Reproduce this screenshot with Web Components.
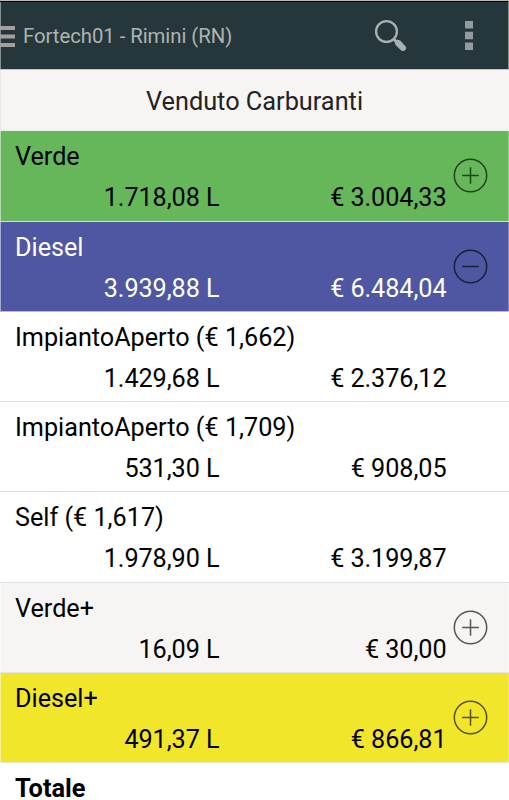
<!DOCTYPE html>
<html lang="it">
<head>
<meta charset="utf-8">
<title>Venduto Carburanti</title>
<style>
  body {
    margin: 0;
    height: 800px;
    overflow: hidden;
    background: #fff;
    color: #000;
    font-family: Roboto, "Liberation Sans", sans-serif;
  }
</style>
</head>
<body>
<sales-screen></sales-screen>

<script>
class AppBar extends HTMLElement {
  connectedCallback() {
    this.attachShadow({ mode: 'open' });
    this.shadowRoot.innerHTML = `
      <style>
        :host {
          display: flex;
          align-items: center;
          box-sizing: border-box;
          height: 69px;
          border-top: 1px solid #b5bab4;
          border-right: 1px solid #84908f;
          background: #25373b;
          box-shadow: inset 0 1px #000, inset 1px 0 #84908f;
          color: #b1b3b2;
        }
        .drawer {
          width: 15px;
          height: 21px;
          margin: 3px 8px 0 0;
        }
        .title {
          flex: 1;
          font-size: 20.3px;
          letter-spacing: -0.03px;
          line-height: 24px;
          white-space: nowrap;
          padding-top: 1px;
        }
        .search {
          width: 34px;
          height: 34px;
          margin: 2px 57.5px 0 0;
        }
        .more {
          width: 8px;
          height: 29px;
          margin: 1px 35px 0 0;
        }
        svg {
          display: block;
        }
      </style>
      <svg class="drawer" viewBox="0 0 15 21" fill="#a5a09f">
        <path d="M0 0h15v4H0zM0 8.500h15v4H0zM0 17h15v4H0z"></path>
      </svg>
      <span class="title"><slot></slot></span>
      <svg class="search" viewBox="0 0 34 34" fill="none" stroke="#a9b0b1">
        <circle cx="12.500" cy="12.500" r="10.400" stroke-width="2.300"></circle>
        <path d="M19.500 20l4 4" stroke-width="2.800"></path>
        <path fill="#a9b0b1" stroke="none" d="M20.800 23.200l2.400-2.600 3 .8 5.300 5.800c1 1.300.8 2.800-.2 3.900s-2.700 1.400-4 .4l-5.800-5.500z"></path>
      </svg>
      <svg class="more" viewBox="0 0 8 29" fill="#929b9d">
        <path d="M0 0h8v7.500H0zM0 10.700h8v7.500H0zM0 21.400h8v7.500H0z"></path>
      </svg>
    `;
  }
}

class SectionTitle extends HTMLElement {
  connectedCallback() {
    this.attachShadow({ mode: 'open' });
    this.shadowRoot.innerHTML = `
      <style>
        :host {
          display: block;
          box-sizing: border-box;
          height: 62px;
          border-top: 1px solid #c3c8c8;
          border-bottom: 1px solid #ebebea;
          background: #f6f5f3;
          box-shadow: inset 1px 0 #e6e8ea;
          color: #232323;
          font-size: 25.3px;
          line-height: 63px;
          text-align: center;
          white-space: nowrap;
        }
      </style>
      <slot></slot>
    `;
  }
}

class ToggleIcon extends HTMLElement {
  connectedCallback() {
    const plus = this.getAttribute('state') !== 'open';
    this.attachShadow({ mode: 'open' });
    this.shadowRoot.innerHTML = `
      <style>
        :host {
          display: block;
          width: 35px;
          height: 35px;
        }
        svg {
          display: block;
        }
      </style>
      <svg width="35" height="35" viewBox="0 0 35 35" fill="none" stroke="#000" stroke-opacity="0.65" stroke-width="1.500">
        <circle cx="17.500" cy="17.500" r="16.200"></circle>
        <path d="M9.200 17.500h16.600${plus ? 'M17.500 9.200v16.600' : ''}"></path>
      </svg>
    `;
  }
}

class FuelRow extends HTMLElement {
  connectedCallback() {
    const toggle = this.getAttribute('toggle');
    this.attachShadow({ mode: 'open' });
    this.shadowRoot.innerHTML = `
      <style>
        :host {
          display: grid;
          grid-template-columns: 219.5px 227px 1fr;
          grid-template-rows: 41px 41px;
          box-sizing: border-box;
          height: 90.35px;
          padding-top: 5px;
          border-bottom: 1px solid var(--line, #dfdfdf);
          background: var(--row-bg, #fff);
          box-shadow: inset 1px 0 rgba(255, 255, 255, 0.5), inset -1px 0 rgba(255, 255, 255, 0.3);
          color: var(--row-fg, #000);
          font-size: 25.2px;
          line-height: 41px;
          white-space: nowrap;
        }
        .name {
          grid-column: 1 / 3;
          padding-left: 15px;
        }
        .amount {
          grid-row: 2;
          text-align: right;
          letter-spacing: -0.06px;
        }
        toggle-icon {
          grid-column: 3;
          grid-row: 1 / 3;
          margin: 22px 0 0 6.5px;
        }
      </style>
      <span class="name"><slot></slot></span>
      <span class="amount"><slot name="litres"></slot></span>
      <span class="amount"><slot name="euro"></slot></span>
      ${toggle ? `<toggle-icon state="${toggle}"></toggle-icon>` : ''}
    `;
  }
}

class SalesScreen extends HTMLElement {
  connectedCallback() {
    this.attachShadow({ mode: 'open' });
    this.shadowRoot.innerHTML = `
      <style>
        :host {
          display: flex;
          flex-direction: column;
          width: 509px;
          height: 800px;
        }
        app-bar, section-title, fuel-row { flex: none; }
        fuel-row.green { --row-bg: #66b75a; --line: #d5dfd5; height: 90.7px; }
        fuel-row.blue { --row-bg: #4f57a2; --row-fg: #fff; --line: #b5b8d6; height: 90px; }
        .gray { --row-bg: #f6f5f3; --line: #e5e5e5; }
        .yellow { --row-bg: #f1e62a; --line: #e9e7cd; }
        fuel-row.total {
          flex: 1;
          grid-template-rows: 24px;
          min-height: 0;
          padding-top: 12.5px;
          border: 0;
          line-height: 24px;
          font-size: 25.4px;
          font-weight: bold;
        }
      </style>
      <app-bar>Fortech01 - Rimini (RN)</app-bar>
      <section-title>Venduto Carburanti</section-title>
      <fuel-row class="green" toggle="closed">Verde
        <span slot="litres">1.718,08 L</span><span slot="euro">€ 3.004,33</span>
      </fuel-row>
      <fuel-row class="blue" toggle="open">Diesel
        <span slot="litres">3.939,88 L</span><span slot="euro">€ 6.484,04</span>
      </fuel-row>
      <fuel-row>ImpiantoAperto (€ 1,662)
        <span slot="litres">1.429,68 L</span><span slot="euro">€ 2.376,12</span>
      </fuel-row>
      <fuel-row>ImpiantoAperto (€ 1,709)
        <span slot="litres">531,30 L</span><span slot="euro">€ 908,05</span>
      </fuel-row>
      <fuel-row>Self (€ 1,617)
        <span slot="litres">1.978,90 L</span><span slot="euro">€ 3.199,87</span>
      </fuel-row>
      <fuel-row class="gray" toggle="closed">Verde+
        <span slot="litres">16,09 L</span><span slot="euro">€ 30,00</span>
      </fuel-row>
      <fuel-row class="yellow" toggle="closed">Diesel+
        <span slot="litres">491,37 L</span><span slot="euro">€ 866,81</span>
      </fuel-row>
      <fuel-row class="total">Totale</fuel-row>
    `;
  }
}

customElements.define('app-bar', AppBar);
customElements.define('section-title', SectionTitle);
customElements.define('toggle-icon', ToggleIcon);
customElements.define('fuel-row', FuelRow);
customElements.define('sales-screen', SalesScreen);
</script>
</body>
</html>
